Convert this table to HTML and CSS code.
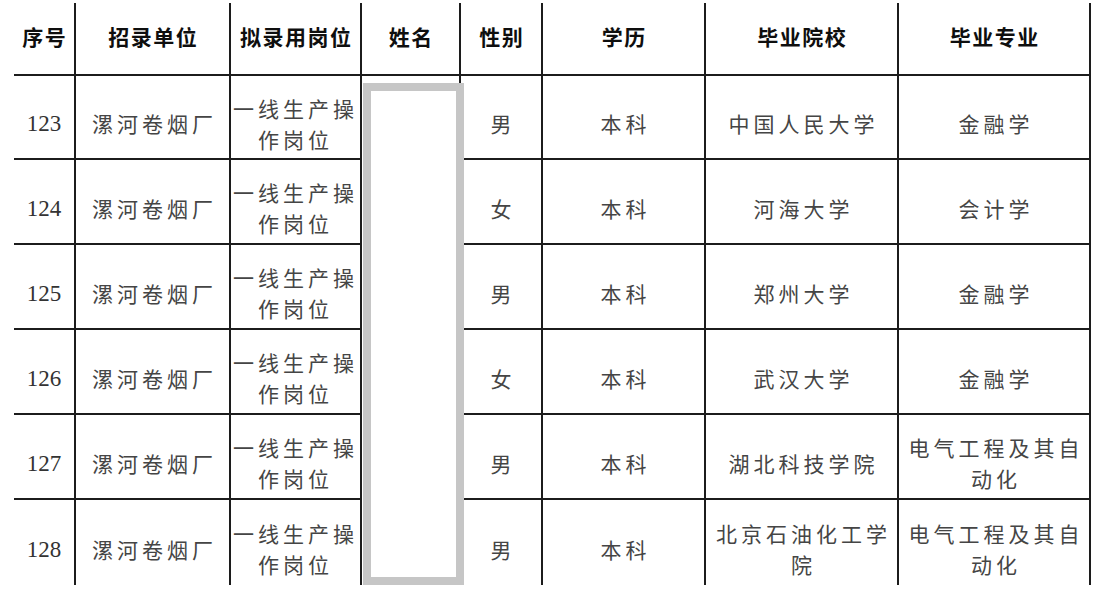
FILE: index.html
```html
<!DOCTYPE html>
<html lang="zh-CN">
<head>
<meta charset="utf-8">
<title>拟录用人员名单</title>
<link rel="stylesheet" href="styles.css">
</head>
<body>
<div class="sheet">
  <div class="th">序号</div>
  <div class="th">招录单位</div>
  <div class="th">拟录用岗位</div>
  <div class="th">姓名</div>
  <div class="th">性别</div>
  <div class="th">学历</div>
  <div class="th">毕业院校</div>
  <div class="th">毕业专业</div>

  <div class="td num">123</div>
  <div class="td">漯河卷烟厂</div>
  <div class="td tight">一线生产操作岗位</div>
  <div class="name-cell"><div class="redact"></div></div>
  <div class="td">男</div>
  <div class="td">本科</div>
  <div class="td">中国人民大学</div>
  <div class="td">金融学</div>

  <div class="td num">124</div>
  <div class="td">漯河卷烟厂</div>
  <div class="td tight">一线生产操作岗位</div>
  <div class="td">女</div>
  <div class="td">本科</div>
  <div class="td">河海大学</div>
  <div class="td">会计学</div>

  <div class="td num">125</div>
  <div class="td">漯河卷烟厂</div>
  <div class="td tight">一线生产操作岗位</div>
  <div class="td">男</div>
  <div class="td">本科</div>
  <div class="td">郑州大学</div>
  <div class="td">金融学</div>

  <div class="td num">126</div>
  <div class="td">漯河卷烟厂</div>
  <div class="td tight">一线生产操作岗位</div>
  <div class="td">女</div>
  <div class="td">本科</div>
  <div class="td">武汉大学</div>
  <div class="td">金融学</div>

  <div class="td num">127</div>
  <div class="td">漯河卷烟厂</div>
  <div class="td tight">一线生产操作岗位</div>
  <div class="td">男</div>
  <div class="td">本科</div>
  <div class="td">湖北科技学院</div>
  <div class="td">电气工程及其自动化</div>

  <div class="td num last">128</div>
  <div class="td last">漯河卷烟厂</div>
  <div class="td tight last">一线生产操作岗位</div>
  <div class="td last">男</div>
  <div class="td last">本科</div>
  <div class="td last">北京石油化工学院</div>
  <div class="td last">电气工程及其自动化</div>
</div>
</body>
</html>
```

FILE: styles.css
```css
html, body {
  margin: 0;
  padding: 0;
  background: #ffffff;
}

body {
  font-family: "Noto Sans CJK SC", "Noto Sans", sans-serif;
}

.sheet {
  display: grid;
  grid-template-columns: 62px 155px 131px 99px 82px 163px 193px 192px;
  grid-template-rows: 73px 84px 85px 85px 85px 85px 85px;
  margin: 3px 0 0 14px;
  width: max-content;
}

.th,
.td,
.name-cell {
  box-sizing: border-box;
  border-right: 2px solid #1c1c1c;
  border-bottom: 2px solid #1c1c1c;
  display: flex;
  align-items: center;
  justify-content: center;
  text-align: center;
}

.th {
  font-size: 21px;
  font-weight: 700;
  color: #0e0e0e;
  letter-spacing: 1.5px;
  padding: 0 0 6px 1.5px;
}

.td {
  font-size: 21px;
  font-weight: 400;
  color: #454545;
  letter-spacing: 4px;
  line-height: 31px;
  padding: 13px 0 0 4px;
}

.td.tight {
  padding-left: 0;
}

.td.num {
  font-family: "Liberation Serif", "Times New Roman", serif;
  font-size: 23px;
  letter-spacing: 0;
  padding-left: 0;
  color: #333333;
}

.td.last {
  border-bottom: none;
}

.name-cell {
  grid-column: 4;
  grid-row: 2 / span 6;
  border-bottom: none;
  position: relative;
}

.redact {
  position: absolute;
  left: 1px;
  top: 7px;
  width: 101px;
  height: 502px;
  box-sizing: border-box;
  border: 8px solid #c6c6c6;
  background: #ffffff;
}
```
